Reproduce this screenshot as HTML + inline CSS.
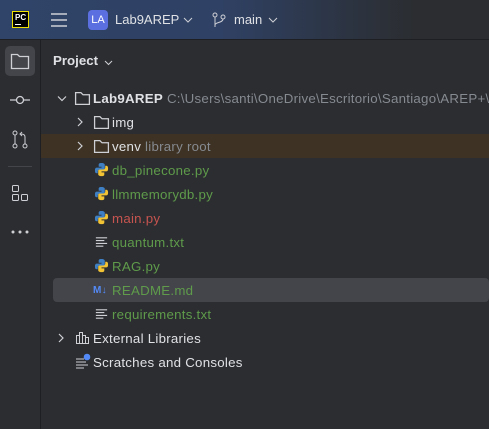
<!DOCTYPE html>
<html><head><meta charset="utf-8"><style>
*{margin:0;padding:0;box-sizing:border-box}
body{width:489px;height:429px;overflow:hidden;background:#2b2d30;font-family:"Liberation Sans",sans-serif;font-size:13px;color:#dfe1e5;position:relative}
.hdr{position:absolute;left:0;top:0;width:489px;height:40px;background:linear-gradient(90deg,#2f4468 0%,#2f4164 45%,#2b2d30 85%);border-bottom:1px solid #1e1f22}
.side{position:absolute;left:0;top:40px;width:41px;height:389px;border-right:1px solid #1e1f22}
.a{position:absolute}
.row{position:absolute;height:24px;line-height:24px;white-space:nowrap;margin-top:1px;font-size:13.3px;letter-spacing:0.25px}
.g{color:#5f9b4b}.r{color:#c75450}.gr{color:#868a91}
</style></head><body>
<div class="hdr"></div>
<div class="a" style="left:12px;top:11px;width:17px;height:17px;background:#000;border:1px solid #f0e000"><div style="color:#fff;font-size:8px;font-weight:bold;position:absolute;left:2px;top:1px;line-height:9px">PC</div><div style="position:absolute;left:2px;top:12px;width:6px;height:1px;background:#fff"></div></div>
<svg class="a" style="left:50px;top:12px" width="18" height="16"><path d="M1 2h16M1 8h16M1 14h16" stroke="#ced0d6" stroke-width="1.5"/></svg>
<div class="a" style="left:88px;top:10px;width:20px;height:20px;background:#5c6fe0;border-radius:4px;color:#fff;font-size:11px;line-height:20px;text-align:center">LA</div>
<div class="a" style="left:115px;top:12px;font-size:13px;color:#dfe1e5">Lab9AREP</div>
<svg class="a" style="left:183px;top:17px" width="10" height="6"><path d="M1 1l4 4 4-4" stroke="#ced0d6" fill="none"/></svg>
<svg class="a" style="left:212px;top:12px" width="14" height="16"><circle cx="3" cy="3" r="2" stroke="#ced0d6" fill="none"/><circle cx="11" cy="5" r="2" stroke="#ced0d6" fill="none"/><path d="M3 5v10M11 7c0 4-8 3-8 6" stroke="#ced0d6" fill="none"/></svg>
<div class="a" style="left:234px;top:12px">main</div>
<svg class="a" style="left:268px;top:17px" width="10" height="6"><path d="M1 1l4 4 4-4" stroke="#ced0d6" fill="none"/></svg>

<div class="side"></div>
<div class="a" style="left:5px;top:46px;width:30px;height:30px;background:#43454a;border-radius:5px"></div>
<svg class="a" style="left:10px;top:52px" width="20" height="18"><path d="M1.5 2.5h6l2 2h9v12h-17z" stroke="#ced0d6" fill="none" stroke-width="1.3"/></svg>
<svg class="a" style="left:9px;top:94px" width="22" height="12"><circle cx="11" cy="6" r="3.5" stroke="#ced0d6" fill="none" stroke-width="1.3"/><path d="M1 6h6M15 6h6" stroke="#ced0d6" stroke-width="1.3"/></svg>
<svg class="a" style="left:11px;top:130px" width="18" height="20"><circle cx="4" cy="3" r="2" stroke="#ced0d6" fill="none"/><circle cx="4" cy="16" r="2" stroke="#ced0d6" fill="none"/><circle cx="14" cy="16" r="2" stroke="#ced0d6" fill="none"/><path d="M4 5v9M14 14v-7q0-3-4-3M11 2l-2 2 2 2" stroke="#ced0d6" fill="none"/></svg>
<div class="a" style="left:8px;top:166px;width:24px;height:1px;background:#43454a"></div>
<svg class="a" style="left:11px;top:184px" width="18" height="18"><rect x="1.5" y="1.5" width="6" height="6" rx="1" stroke="#ced0d6" fill="none"/><rect x="1.5" y="10.5" width="6" height="6" rx="1" stroke="#ced0d6" fill="none"/><rect x="10.5" y="10.5" width="6" height="6" rx="1" stroke="#ced0d6" fill="none"/></svg>
<svg class="a" style="left:11px;top:230px" width="18" height="4"><circle cx="2" cy="2" r="1.5" fill="#ced0d6"/><circle cx="9" cy="2" r="1.5" fill="#ced0d6"/><circle cx="16" cy="2" r="1.5" fill="#ced0d6"/></svg>

<div class="a" style="left:53px;top:53px;font-weight:bold;font-size:13.3px">Project</div>
<svg class="a" style="left:104px;top:60px" width="9" height="6"><path d="M1 1l3.5 3.5 3.5-3.5" stroke="#ced0d6" fill="none"/></svg>

<div class="a" style="left:41px;top:134px;width:448px;height:24px;background:#3d3223"></div>
<div class="a" style="left:53px;top:278px;width:436px;height:24px;background:#43454a;border-radius:4px"></div>

<svg width="0" height="0" style="position:absolute"><defs>
<symbol id="fold" viewBox="0 0 16 14"><path d="M1.5 1.5h5l2 2h6v9h-13z" stroke="#ced0d6" fill="none" stroke-width="1.2"/></symbol>
<symbol id="py" viewBox="0 0 16 16"><path d="M8 1c-3 0-3 1-3 2v2h3v1H3c-1.5 0-2 1-2 3s.5 3 2 3h1v-2c0-1 1-2 2-2h4c1 0 1.5-.5 1.5-1.5V3c0-1-1-2-3.5-2z" fill="#3f7fc4"/><path d="M8 15c3 0 3-1 3-2v-2H8v-1h5c1.5 0 2-1 2-3s-.5-3-2-3h-1v2c0 1-1 2-2 2H6c-1 0-1.5.5-1.5 1.5V13c0 1 1 2 3.5 2z" fill="#f2c335"/></symbol>
<symbol id="txt" viewBox="0 0 16 16"><path d="M2 4h12M2 7h9M2 10h12M2 13h8" stroke="#ced0d6" stroke-width="1.2"/></symbol>
<symbol id="chr" viewBox="0 0 8 10"><path d="M2 1l4 4-4 4" stroke="#ced0d6" fill="none" stroke-width="1.2"/></symbol>
</defs></svg>

<svg class="a" style="left:57px;top:95px" width="10" height="8"><path d="M1 1.5l4 4 4-4" stroke="#ced0d6" fill="none" stroke-width="1.2"/></svg>
<svg class="a" style="left:74px;top:91px" width="17" height="15"><use href="#fold"/></svg>
<div class="row" style="left:93px;top:86px"><b>Lab9AREP</b> <span class="gr">C:\Users\santi\OneDrive\Escritorio\Santiago\AREP+\</span></div>

<svg class="a" style="left:76px;top:117px" width="8" height="10"><use href="#chr"/></svg>
<svg class="a" style="left:93px;top:115px" width="17" height="15"><use href="#fold"/></svg>
<div class="row" style="left:112px;top:110px">img</div>
<svg class="a" style="left:76px;top:141px" width="8" height="10"><use href="#chr"/></svg>
<svg class="a" style="left:93px;top:139px" width="17" height="15"><use href="#fold"/></svg>
<div class="row" style="left:112px;top:134px">venv <span class="gr">library root</span></div>

<svg class="a" style="left:94px;top:162px" width="15" height="15"><use href="#py"/></svg>
<div class="row g" style="left:112px;top:158px">db_pinecone.py</div>
<svg class="a" style="left:94px;top:186px" width="15" height="15"><use href="#py"/></svg>
<div class="row g" style="left:112px;top:182px">llmmemorydb.py</div>
<svg class="a" style="left:94px;top:210px" width="15" height="15"><use href="#py"/></svg>
<div class="row r" style="left:112px;top:206px">main.py</div>
<svg class="a" style="left:94px;top:234px" width="15" height="15"><use href="#txt"/></svg>
<div class="row g" style="left:112px;top:230px">quantum.txt</div>
<svg class="a" style="left:94px;top:258px" width="15" height="15"><use href="#py"/></svg>
<div class="row g" style="left:112px;top:254px">RAG.py</div>
<div class="row" style="left:93px;top:278px;color:#548af7;font-size:10px;font-weight:bold">M&#8595;</div>
<div class="row g" style="left:112px;top:278px">README.md</div>
<svg class="a" style="left:94px;top:306px" width="15" height="15"><use href="#txt"/></svg>
<div class="row g" style="left:112px;top:302px">requirements.txt</div>

<svg class="a" style="left:57px;top:333px" width="8" height="10"><use href="#chr"/></svg>
<svg class="a" style="left:75px;top:331px" width="15" height="14"><path d="M1.5 4.5h3v8h-3zM4.5 1.5h3v11h-3zM7.5 4.5h3v8h-3zM10.5 6.5h3v6h-3z" stroke="#ced0d6" fill="none"/></svg>
<div class="row" style="left:93px;top:326px">External Libraries</div>
<svg class="a" style="left:75px;top:353px" width="16" height="16"><path d="M1 6h8M1 9h10M1 12h12M1 15h8" stroke="#ced0d6" stroke-width="1.1"/><circle cx="12" cy="4" r="3.3" fill="#548af7"/></svg>
<div class="row" style="left:93px;top:350px">Scratches and Consoles</div>
</body></html>
